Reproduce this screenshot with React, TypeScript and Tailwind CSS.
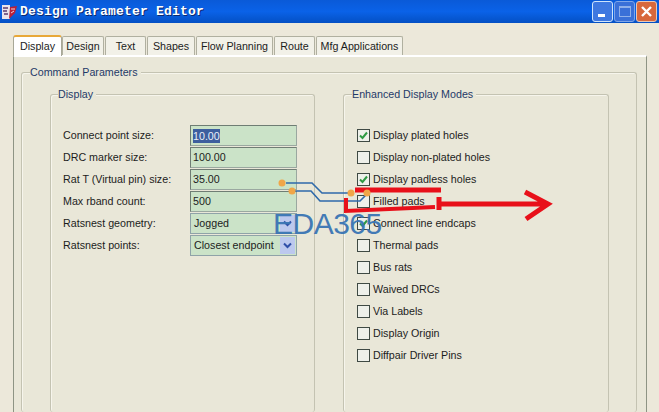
import React from "react";

const tabs: [string, string][] = [
  ["Design", "w-[42px]"],
  ["Text", "w-[41px]"],
  ["Shapes", "w-[48px]"],
  ["Flow Planning", "w-[77px]"],
  ["Route", "w-[41px]"],
  ["Mfg Applications", "w-[87px]"],
];

const fields: [string, string, "sel" | "text" | "combo"][] = [
  ["Connect point size:", "10.00", "sel"],
  ["DRC marker size:", "100.00", "text"],
  ["Rat T (Virtual pin) size:", "35.00", "text"],
  ["Max rband count:", "500", "text"],
  ["Ratsnest geometry:", "Jogged", "combo"],
  ["Ratsnest points:", "Closest endpoint", "combo"],
];

const checks: [string, boolean][] = [
  ["Display plated holes", true],
  ["Display non-plated holes", false],
  ["Display padless holes", true],
  ["Filled pads", false],
  ["Connect line endcaps", true],
  ["Thermal pads", false],
  ["Bus rats", false],
  ["Waived DRCs", false],
  ["Via Labels", false],
  ["Display Origin", false],
  ["Diffpair Driver Pins", false],
];

function Field({ value, kind }: { value: string; kind: "sel" | "text" | "combo" }) {
  if (kind === "combo") {
    return (
      <div className="w-[107px] h-[21px] bg-[#cbe3c8] border border-[#8fa3a8] flex items-center pl-[2px] pr-[1px] justify-between">
        <span className="pl-[1px]">{value}</span>
        <span className="w-[15px] h-[17px] bg-[#bcc8ee] flex items-center justify-center">
          <svg width="9" height="7" viewBox="0 0 9 7">
            <path d="M1 1.5 L4.5 5 L8 1.5" fill="none" stroke="#2f4fa8" strokeWidth="2" />
          </svg>
        </span>
      </div>
    );
  }
  return (
    <div className="w-[107px] h-[21px] bg-[#cbe3c8] border border-[#9aa8a0] border-t-[#6f7d74] border-l-[#6f7d74] flex items-center pl-[2px]">
      {kind === "sel" ? <span className="bg-[#3d5f9e] text-[#e8eef8] h-[14px] leading-[14px]">{value}</span> : <span>{value}</span>}
    </div>
  );
}

function Check({ on }: { on: boolean }) {
  return (
    <span className="w-[13px] h-[13px] border border-[#3f4a44] bg-[#eef0ea] flex items-center justify-center shrink-0">
      {on && (
        <svg width="9" height="9" viewBox="0 0 9 9">
          <path d="M1 4.5 L3.5 7 L8 1.5" fill="none" stroke="#2f9a44" strokeWidth="2" />
        </svg>
      )}
    </span>
  );
}

function Group({ title, className, legendClass, children }: { title: string; className: string; legendClass: string; children?: React.ReactNode }) {
  return (
    <div className={`relative border border-[#c4c3b2] shadow-[inset_1px_1px_0_#f6f5ec] rounded-[3px] ${className}`}>
      <span className={`absolute top-[-9px] bg-[#e9e7d8] pr-[3px] text-[#1f3a68] ${legendClass}`}>{title}</span>
      {children}
    </div>
  );
}

export default function App() {
  return (
    <div className="relative w-[659px] h-[412px] overflow-hidden flex flex-col bg-[#ece8da] text-[#1c1c1c] text-[10.7px] font-['Liberation_Sans',Arial,sans-serif]">
      <header className="h-[23px] shrink-0 bg-gradient-to-b from-[#0a5ad8] via-[#0a62e8] to-[#0450c4] flex items-center pl-[1px] pr-[2px]">
        <svg width="18" height="18" viewBox="0 0 18 18" className="shrink-0">
          <rect x="1" y="2" width="8" height="14" fill="#e8e4ea" />
          <path d="M9 4 L16 3 L14 10 L8 16 Z" fill="#b8203a" />
          <path d="M2 5 H7 M2 8 H6 M3 11 H7" stroke="#5a3a70" strokeWidth="1.5" />
          <path d="M10 6 L14 6 M10 10 L13 8" stroke="#f0d0d8" strokeWidth="1" />
        </svg>
        <span className="ml-[1px] text-white font-bold text-[13px] tracking-[0.2px] font-['Liberation_Mono',monospace] [text-shadow:1px_1px_0_#0a2a70]">
          Design Parameter Editor
        </span>
        <div className="ml-auto flex items-center gap-[1px]">
          <span className="w-[21px] h-[21px] rounded-[3px] border border-[#cfe4fb] bg-[#3f78e0] flex items-end pl-[5px] pb-[4px]">
            <span className="w-[7px] h-[3px] bg-white" />
          </span>
          <span className="w-[21px] h-[21px] rounded-[3px] border border-[#7ea5e8] bg-[#3a70d8] flex items-center justify-center">
            <span className="w-[12px] h-[11px] border border-[#8fb0ea] border-t-2" />
          </span>
          <span className="w-[21px] h-[21px] rounded-[3px] border border-[#e8c8b8] bg-[#d8683c] flex items-center justify-center">
            <svg width="13" height="13" viewBox="0 0 13 13">
              <path d="M2 2 L11 11 M11 2 L2 11" stroke="#fff" strokeWidth="2.4" />
            </svg>
          </span>
        </div>
      </header>

      <main className="flex-1 min-h-0 flex flex-col pt-[11px] pl-[13px] pr-[12px]">
        <nav className="flex items-end h-[21px] shrink-0 relative z-10">
          <span className="w-[49px] h-[21px] mb-[-1px] border border-b-0 border-[#a8a898] border-t-2 border-t-[#e8a838] rounded-t-[3px] bg-white flex items-center justify-center">
            Display
          </span>
          {tabs.map(([t, w]) => (
            <span key={t} className={`${w} h-[19px] mr-[1px] border border-[#b0b0a0] border-b-0 rounded-t-[2px] bg-[#f2f1e8] flex items-center justify-center`}>
              {t}
            </span>
          ))}
        </nav>
        <section className="flex-1 min-h-0 border border-[#8e9484] border-b-0 border-t-white border-t-2 bg-[#e9e7d8] pt-[15px] pl-[7px] pr-[9px] flex flex-col">
          <Group title="Command Parameters" legendClass="left-[8px]" className="flex-1 min-h-0 border-b-0 flex gap-[28px] pt-[21px] pl-[28px] pr-[27px]">
            <Group title="Display" legendClass="left-[7px]" className="w-[265px] border-b-0 pt-[30px] pl-[12px]">
              <div className="flex flex-col gap-[1px]">
                {fields.map(([label, value, kind]) => (
                  <div key={label} className="flex items-center h-[21px]">
                    <span className="w-[127px]">{label}</span>
                    <Field value={value} kind={kind} />
                  </div>
                ))}
              </div>
            </Group>
            <Group title="Enhanced Display Modes" legendClass="left-[8px]" className="w-[266px] border-b-0 pt-[29px] pl-[13px]">
              <div className="flex flex-col">
                {checks.map(([label, on]) => (
                  <label key={label} className="flex items-center h-[22px] gap-[3px]">
                    <Check on={on} />
                    <span>{label}</span>
                  </label>
                ))}
              </div>
            </Group>
          </Group>
        </section>
      </main>

      <svg className="absolute inset-0 pointer-events-none" width="659" height="412" viewBox="0 0 659 412">
        <path d="M286 183 H312 L322 193 H349 M295 191 H311 L320 201 H360 L366 195" fill="none" stroke="#2f6aaa" strokeWidth="1.6" />
        <circle cx="282" cy="183" r="3.5" fill="#f0a648" />
        <circle cx="292" cy="191" r="3.5" fill="#f0a648" />
        <path d="M355 190 H441" stroke="#e8101a" strokeWidth="5" />
        <path d="M346 198 V211 L435 207" fill="none" stroke="#e8101a" strokeWidth="4" />
        <path d="M439 197 V210 M440 204 H548 M525 192 L548 204 L526 219" fill="none" stroke="#e8101a" strokeWidth="5" />
        <circle cx="351" cy="193" r="3.5" fill="#f0a648" />
        <circle cx="367" cy="193" r="3.5" fill="#f0a648" />
      </svg>
      <span className="absolute left-[273px] top-[204px] text-[#3a75b4] text-[30px] tracking-[-0.5px] leading-[40px] pointer-events-none opacity-95">
        EDA365
      </span>
    </div>
  );
}
